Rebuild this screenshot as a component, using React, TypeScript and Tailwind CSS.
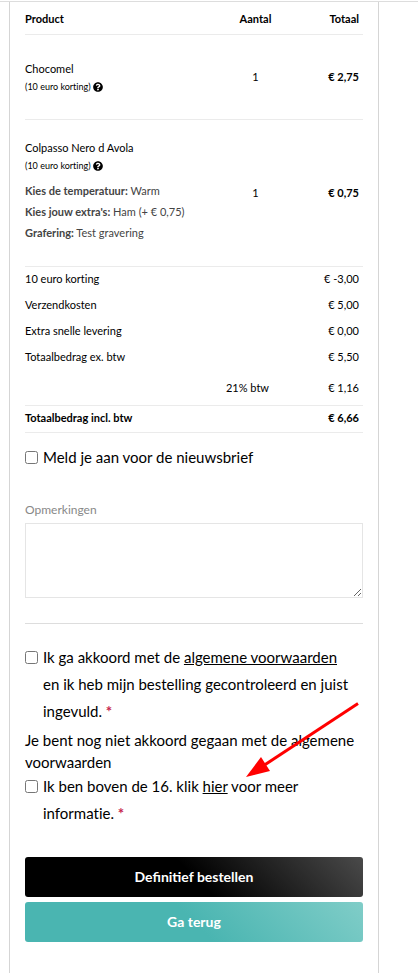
import { FaQuestionCircle } from 'react-icons/fa'

interface Option {
  label: string
  value: string
}

interface Product {
  name: string
  discount: string
  options: Option[]
  amount: number
  total: string
}

const products: Product[] = [
  { name: 'Chocomel', discount: '(10 euro korting)', options: [], amount: 1, total: '€ 2,75' },
  {
    name: 'Colpasso Nero d Avola',
    discount: '(10 euro korting)',
    options: [
      { label: 'Kies de temperatuur:', value: 'Warm' },
      { label: "Kies jouw extra's:", value: 'Ham (+ € 0,75)' },
      { label: 'Grafering:', value: 'Test gravering' },
    ],
    amount: 1,
    total: '€ 0,75',
  },
]

const costs = [
  { label: '10 euro korting', total: '€ -3,00' },
  { label: 'Verzendkosten', total: '€ 5,00' },
  { label: 'Extra snelle levering', total: '€ 0,00' },
  { label: 'Totaalbedrag ex. btw', total: '€ 5,50' },
]

function ProductRow({ product }: { product: Product }) {
  return (
    <tr className="border-b border-[#ebebeb]">
      <td className={product.options.length > 0 ? 'pt-[18px] pb-[23px]' : 'pt-6 pb-6'}>
        <div className="leading-5">{product.name}</div>
        <div className="flex items-center gap-0.5 text-[9px] leading-4">
          {product.discount}
          <FaQuestionCircle size={10} />
        </div>
        {product.options.length > 0 && (
          <div className="pt-1.5 leading-[21px] text-[#444]">
            {product.options.map((option) => (
              <div key={option.label}>
                <strong>{option.label}</strong> {option.value}
              </div>
            ))}
          </div>
        )}
      </td>
      <td className="pt-0.5 text-center">{product.amount}</td>
      <td className="pt-0.5 pr-1 text-right font-bold">{product.total}</td>
    </tr>
  )
}

function OrderTable() {
  return (
    <table className="w-full table-fixed border-collapse text-[11px]">
      <colgroup>
        <col />
        <col className="w-[35px]" />
        <col className="w-[90px]" />
      </colgroup>
      <thead>
        <tr className="h-8 border-b border-[#ebebeb]">
          <th className="pt-0.5 text-left">Product</th>
          <th className="pt-0.5 text-center">Aantal</th>
          <th className="pt-0.5 pr-1 text-right">Totaal</th>
        </tr>
      </thead>
      <tbody>
        {products.map((product) => (
          <ProductRow key={product.name} product={product} />
        ))}
        {costs.map((cost) => (
          <tr key={cost.label} className="h-[26px]">
            <td colSpan={2}>{cost.label}</td>
            <td className="pr-1 text-right">{cost.total}</td>
          </tr>
        ))}
        <tr className="h-[35px] border-b border-[#ebebeb]">
          <td colSpan={2} className="pt-0.5 pr-1 text-right">21% btw</td>
          <td className="pt-0.5 pr-1 text-right">€ 1,16</td>
        </tr>
        <tr className="h-[27px] border-b border-[#ebebeb] font-bold">
          <td colSpan={2}>Totaalbedrag incl. btw</td>
          <td className="pr-1 text-right">€ 6,66</td>
        </tr>
      </tbody>
    </table>
  )
}

function CheckRow({ id, children }: { id: string; children: React.ReactNode }) {
  return (
    <div className="flex items-start gap-[5px] pr-2 leading-[27px]">
      <input id={id} type="checkbox" className="mt-[7px] size-[13px] shrink-0" />
      <label htmlFor={id}>{children}</label>
    </div>
  )
}

function Required() {
  return <span className="font-bold text-[#c7254e]">*</span>
}

export default function App() {
  return (
    <div className="min-h-screen bg-white pt-px font-['Lato',sans-serif] text-[15px] text-black [font-variant-ligatures:none]">
      <div className="border-t border-[#ddd]">
        <main className="relative mr-[39px] ml-[9px] border-x border-[#d5d5d5] px-[15px] pb-[31px]">
          <OrderTable />

          <div className="pt-[11px]">
            <CheckRow id="newsletter">Meld je aan voor de nieuwsbrief</CheckRow>
          </div>

          <div className="pt-[30px]">
            <label htmlFor="remarks" className="block text-xs leading-[18px] text-[#888]">
              Opmerkingen
            </label>
            <textarea
              id="remarks"
              className="mt-1 block h-[75px] w-full resize border border-[#e5e5e5] bg-white"
            />
          </div>

          <hr className="mt-[25px] mb-5 border-[#ddd]" />

          <CheckRow id="terms">
            Ik ga akkoord met de <a href="#terms" className="underline">algemene voorwaarden</a> en ik
            heb mijn bestelling gecontroleerd en juist ingevuld. <Required />
          </CheckRow>
          <p className="pt-1 leading-[22px]">
            Je bent nog niet akkoord gegaan met de algemene voorwaarden
          </p>
          <CheckRow id="age">
            Ik ben boven de 16. klik <a href="#age" className="underline">hier</a> voor meer
            informatie. <Required />
          </CheckRow>

          <div className="flex flex-col gap-[5px] pt-[30px] text-sm font-bold text-white">
            <button
              type="button"
              className="h-10 rounded-[3px] bg-[linear-gradient(45deg,#000_50%,#4a4a4a)] [font-variant-ligatures:normal]"
            >
              Definitief bestellen
            </button>
            <button
              type="button"
              className="h-10 rounded-[3px] bg-[linear-gradient(45deg,#4ab5b1_50%,#80cdc8)]"
            >
              Ga terug
            </button>
          </div>

          {/* Arrow pointing at the age link */}
          <svg
            className="pointer-events-none absolute right-[19px] bottom-[194px]"
            width="114"
            height="78"
            viewBox="0 0 114 78"
            aria-hidden="true"
          >
            <path d="M113 2.5L18 65" stroke="#f00" strokeWidth="3" />
            <path d="M1 76L16 56L25 70Z" fill="#f00" />
          </svg>
        </main>
      </div>
    </div>
  )
}
